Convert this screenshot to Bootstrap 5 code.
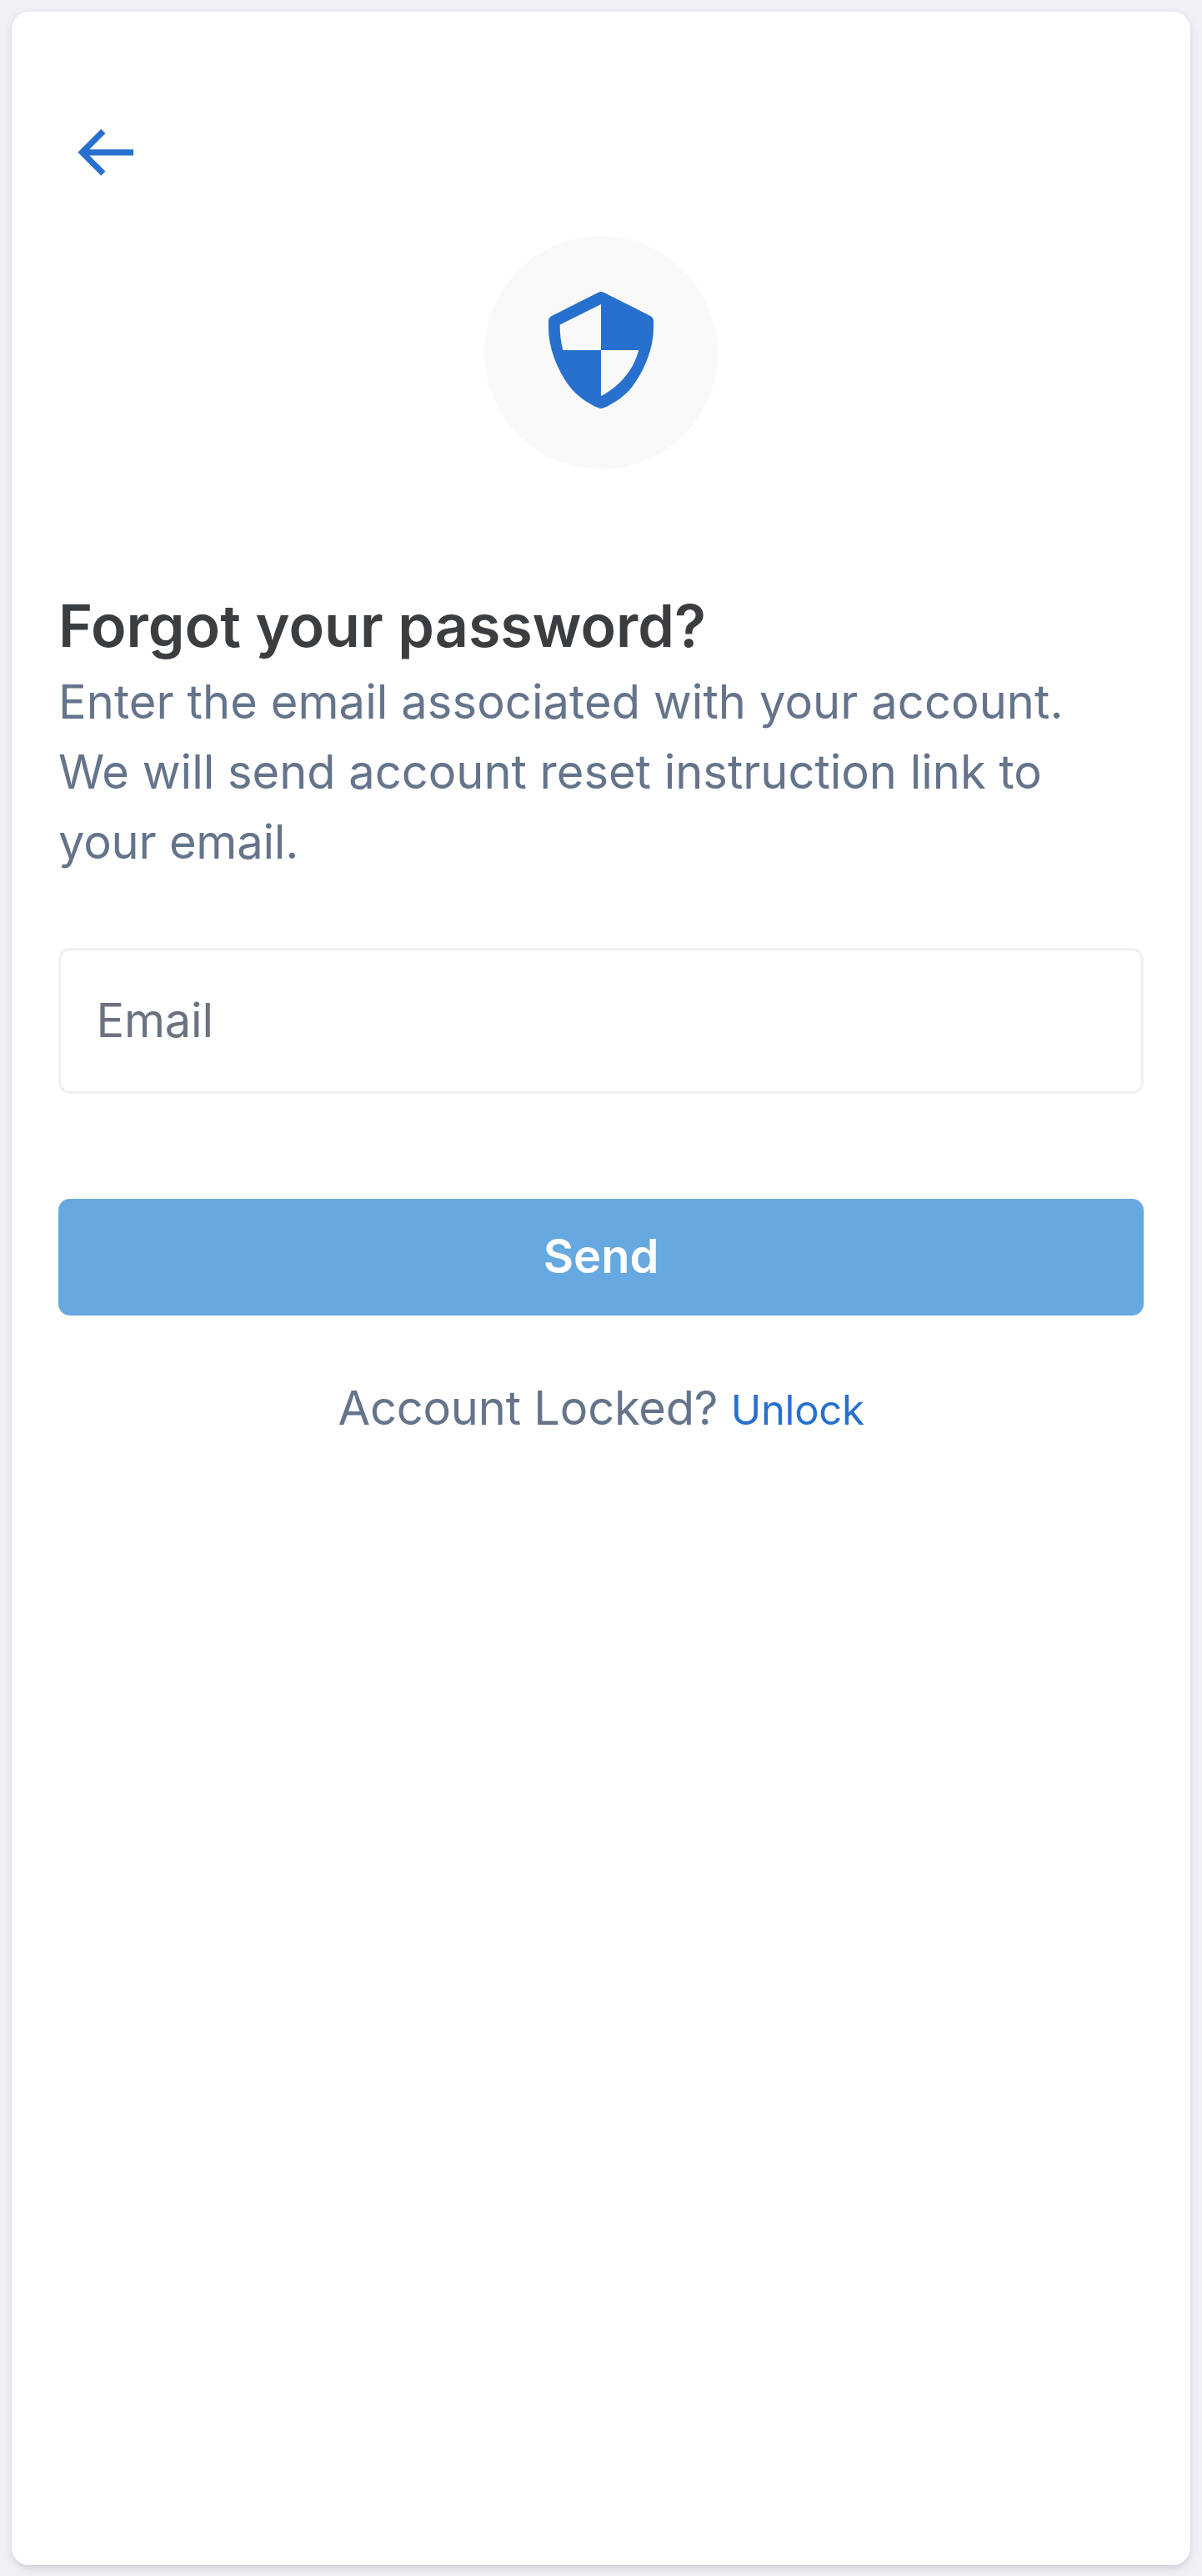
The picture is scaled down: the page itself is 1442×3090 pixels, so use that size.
<!DOCTYPE html>
<html lang="en">
<head>
<meta charset="utf-8">
<meta name="viewport" content="width=device-width, initial-scale=1">
<title>Forgot your password?</title>
<link href="https://cdn.jsdelivr.net/npm/bootstrap@5.3.0/dist/css/bootstrap.min.css" rel="stylesheet">
<style>
body{background:#f0f1f5;font-family:Inter,sans-serif;font-size:56px;line-height:84px;color:#64748b}
.page-frame{height:3090px;padding:14px 14px 13px}
.panel{border-radius:21px;padding:125px 56px 0;box-shadow:0 3.5px 10.5px rgba(0,0,0,.1),0 3.5px 7px -3.5px rgba(0,0,0,.1)}
.back-link{margin-left:14px;width:87px;height:87.5px;color:#2870ce}
.back-link svg,.shield-disc svg{display:block}
.shield-disc{width:280px;height:280px;margin-top:56.5px;padding-bottom:6px;background:#f9f9f9;color:#2870ce}
.title{margin:139px 0 0;font-size:70px;line-height:98px;font-weight:600;color:#3b3e41}
.intro-first{letter-spacing:.09px}
.intro-last{letter-spacing:-.2px}
.email-field{margin-top:85px;height:175px;border:3px solid #f0f1f5;border-radius:14px;padding:0 42.5px 2px;font-size:56px;color:#3b3e41;box-shadow:inset 0 0 0 .5px #f0f1f5}
.email-field::placeholder{color:#6b7280;opacity:1;letter-spacing:-.2px}
.send-btn{margin-top:126px;height:140px;border:0;border-radius:14px;padding:0 0 2px;background:#66a8e0;font-size:56px;line-height:84px;font-weight:600}
.locked{margin-top:69px;letter-spacing:-.2px}
.unlock{font-size:49px;color:#2870ce;letter-spacing:-.3px}
</style>
<script src="https://cdn.jsdelivr.net/npm/bootstrap@5.3.0/dist/js/bootstrap.bundle.min.js"></script>
</head>
<body>
<div class="page-frame">
  <main class="panel bg-white h-100 d-flex flex-column">
    <a href="#" class="back-link d-block" aria-label="Back">
      <svg width="87" height="87.5" viewBox="0 0 24 24" fill="currentColor"><path d="M21 11H6.414l5.293-5.293-1.414-1.414L2.586 12l7.707 7.707 1.414-1.414L6.414 13H21z"/></svg>
    </a>
    <div class="shield-disc rounded-circle d-flex align-items-center justify-content-center align-self-center">
      <svg width="168" height="168" viewBox="0 0 24 24" fill="currentColor"><path fill-rule="evenodd" d="M11.55 2.1a1 1 0 0 1 .9 0l8 4.05A1 1 0 0 1 21 7v1.2c0 3.3-1.4 7-3.6 10-1.3 1.65-3.1 2.9-4.95 3.7a1 1 0 0 1-.9 0C9.7 21.1 7.9 19.85 6.6 18.2 4.4 15.2 3 11.5 3 8.2V7a1 1 0 0 1 .55-.85zM12 4.13 4.96 7.63C4.96 9.2 5.1 10.7 5.5 12H12zM12 12v7.87c3.1-1.55 5.65-4.5 6.45-7.87z"/></svg>
    </div>
    <h1 class="title">Forgot your password?</h1>
    <p class="mb-0"><span class="intro-first">Enter the email associated with your account.</span> We will send account reset instruction link to <span class="intro-last">your email.</span></p>
    <form class="d-flex flex-column">
      <input type="email" class="form-control email-field" placeholder="Email">
      <button type="button" class="btn btn-primary w-100 send-btn">Send</button>
    </form>
    <p class="locked text-center mb-0">Account Locked? <a href="#" class="unlock text-decoration-none">Unlock</a></p>
  </main>
</div>
</body>
</html>
